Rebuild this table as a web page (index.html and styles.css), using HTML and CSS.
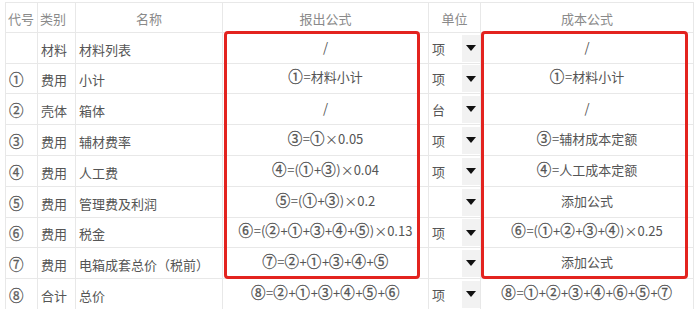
FILE: index.html
```html
<!DOCTYPE html>
<html lang="zh">
<head>
<meta charset="utf-8">
<title>报价表</title>
<link rel="stylesheet" href="styles.css">
</head>
<body>
<div class="sheet">
  <table class="grid">
    <colgroup>
      <col class="c-code"><col class="c-cat"><col class="c-name"><col class="c-quote"><col class="c-unit"><col class="c-cost">
    </colgroup>
    <thead>
      <tr>
        <th class="left">代号</th>
        <th class="left">类别</th>
        <th>名称</th>
        <th>报出公式</th>
        <th>单位</th>
        <th>成本公式</th>
      </tr>
    </thead>
    <tbody>
      <tr>
        <td class="code"></td><td class="cat">材料</td><td class="name">材料列表</td>
        <td class="formula">/</td>
        <td class="unit"><div class="unit-in"><span class="u">项</span><span class="dd"><i class="tri"></i></span></div></td>
        <td class="formula">/</td>
      </tr>
      <tr>
        <td class="code"><span class="n">①</span></td><td class="cat">费用</td><td class="name">小计</td>
        <td class="formula"><span class="n">①</span>=材料小计</td>
        <td class="unit"><div class="unit-in"><span class="u">项</span><span class="dd"><i class="tri"></i></span></div></td>
        <td class="formula"><span class="n">①</span>=材料小计</td>
      </tr>
      <tr>
        <td class="code"><span class="n">②</span></td><td class="cat">壳体</td><td class="name">箱体</td>
        <td class="formula">/</td>
        <td class="unit"><div class="unit-in"><span class="u">台</span><span class="dd"><i class="tri"></i></span></div></td>
        <td class="formula">/</td>
      </tr>
      <tr>
        <td class="code"><span class="n">③</span></td><td class="cat">费用</td><td class="name">辅材费率</td>
        <td class="formula"><span class="n">③</span>=<span class="n">①</span>×0.05</td>
        <td class="unit"><div class="unit-in"><span class="u">项</span><span class="dd"><i class="tri"></i></span></div></td>
        <td class="formula"><span class="n">③</span>=辅材成本定额</td>
      </tr>
      <tr>
        <td class="code"><span class="n">④</span></td><td class="cat">费用</td><td class="name">人工费</td>
        <td class="formula"><span class="n">④</span>=(<span class="n">①</span>+<span class="n">③</span>)×0.04</td>
        <td class="unit"><div class="unit-in"><span class="u">项</span><span class="dd"><i class="tri"></i></span></div></td>
        <td class="formula"><span class="n">④</span>=人工成本定额</td>
      </tr>
      <tr>
        <td class="code"><span class="n">⑤</span></td><td class="cat">费用</td><td class="name">管理费及利润</td>
        <td class="formula"><span class="n">⑤</span>=(<span class="n">①</span>+<span class="n">③</span>)×0.2</td>
        <td class="unit"><div class="unit-in"><span class="u"></span><span class="dd"><i class="tri"></i></span></div></td>
        <td class="formula">添加公式</td>
      </tr>
      <tr>
        <td class="code"><span class="n">⑥</span></td><td class="cat">费用</td><td class="name">税金</td>
        <td class="formula"><span class="n">⑥</span>=(<span class="n">②</span>+<span class="n">①</span>+<span class="n">③</span>+<span class="n">④</span>+<span class="n">⑤</span>)×0.13</td>
        <td class="unit"><div class="unit-in"><span class="u">项</span><span class="dd"><i class="tri"></i></span></div></td>
        <td class="formula"><span class="n">⑥</span>=(<span class="n">①</span>+<span class="n">②</span>+<span class="n">③</span>+<span class="n">④</span>)×0.25</td>
      </tr>
      <tr>
        <td class="code"><span class="n">⑦</span></td><td class="cat">费用</td><td class="name">电箱成套总价（税前）</td>
        <td class="formula"><span class="n">⑦</span>=<span class="n">②</span>+<span class="n">①</span>+<span class="n">③</span>+<span class="n">④</span>+<span class="n">⑤</span></td>
        <td class="unit"><div class="unit-in"><span class="u"></span><span class="dd"><i class="tri"></i></span></div></td>
        <td class="formula">添加公式</td>
      </tr>
      <tr>
        <td class="code"><span class="n">⑧</span></td><td class="cat">合计</td><td class="name">总价</td>
        <td class="formula"><span class="n">⑧</span>=<span class="n">②</span>+<span class="n">①</span>+<span class="n">③</span>+<span class="n">④</span>+<span class="n">⑤</span>+<span class="n">⑥</span></td>
        <td class="unit"><div class="unit-in"><span class="u">项</span><span class="dd"><i class="tri"></i></span></div></td>
        <td class="formula"><span class="n">⑧</span>=<span class="n">①</span>+<span class="n">②</span>+<span class="n">③</span>+<span class="n">④</span>+<span class="n">⑥</span>+<span class="n">⑤</span>+<span class="n">⑦</span></td>
      </tr>
    </tbody>
  </table>
  <div class="mark mark-quote"></div>
  <div class="mark mark-cost"></div>
</div>
</body>
</html>
```

FILE: styles.css
```css
* { box-sizing: border-box; }
html, body { margin: 0; padding: 0; background: #fff; }
body {
  font-family: "Noto Sans CJK SC", "Noto Sans", sans-serif;
  font-size: 13px;
  color: #555;
}
.sheet {
  position: relative;
  width: 694px;
  height: 309px;
  overflow: hidden;
  padding: 2px 0 0 5px;
}
.grid {
  border-collapse: collapse;
  table-layout: fixed;
  width: 688px;
}
.c-code { width: 32px; }
.c-cat { width: 38px; }
.c-name { width: 147px; }
.c-quote { width: 206px; }
.c-unit { width: 52px; }
.c-cost { width: 213px; }

.grid th, .grid td {
  border: 1px solid #e8e8e8;
  padding: 0;
  white-space: nowrap;
  overflow: hidden;
}
.grid th {
  height: 30px;
  font-weight: normal;
  color: #8a8a8a;
  text-align: center;
  padding-top: 1px;
}
.grid th.left { text-align: left; padding-left: 2px; }
.grid td { height: 31px; }
.grid tbody tr:nth-child(2) td,
.grid tbody tr:nth-child(7) td { height: 30px; }

.n {
  font-size: 14.5px;
  line-height: 0;
  letter-spacing: 0.6px;
  -webkit-text-stroke: 0.3px #555;
}

.code { padding-left: 3px !important; padding-top: 2px !important; color: #666; }
.cat { padding-left: 3px !important; padding-top: 2px !important; }
.name { padding-left: 3px !important; padding-top: 2px !important; }
.formula { text-align: center; padding-bottom: 4px !important; }

.unit-in {
  display: flex;
  align-items: stretch;
  height: 27px;
}
.u {
  flex: 1;
  padding-left: 3px;
  padding-top: 4px;
}
.dd {
  width: 18px;
  background: #f2f2f2;
  display: flex;
  align-items: center;
  justify-content: center;
}
.tri {
  display: block;
  width: 0;
  height: 0;
  border-left: 5px solid transparent;
  border-right: 5px solid transparent;
  border-top: 6px solid #111;
}

.mark {
  position: absolute;
  top: 31px;
  height: 248px;
  border: 3px solid #e3231f;
  border-radius: 4px;
  pointer-events: none;
}
.mark-quote { left: 224px; width: 196px; }
.mark-cost { left: 481px; width: 207px; }
```
